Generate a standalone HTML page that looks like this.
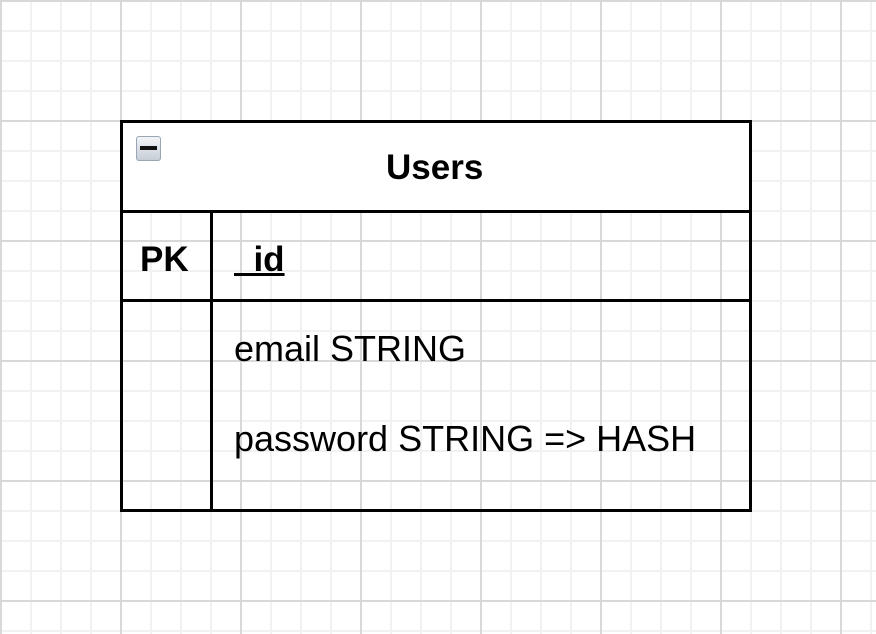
<!DOCTYPE html>
<html><head><style>
html,body{margin:0;padding:0;}
body{width:876px;height:634px;position:relative;overflow:hidden;background-color:#fff;
background-image:
linear-gradient(to right,#d8d8d8 0,#d8d8d8 2px,transparent 2px),
linear-gradient(to bottom,#d8d8d8 0,#d8d8d8 2px,transparent 2px),
linear-gradient(to right,#f1f1f1 0,#f1f1f1 2px,transparent 2px),
linear-gradient(to bottom,#f1f1f1 0,#f1f1f1 2px,transparent 2px);
background-size:120px 120px,120px 120px,30px 30px,30px 30px;
background-position:0 0,0 0,0 0,0 0;
font-family:"Liberation Sans",Arial,sans-serif;}
.b{position:absolute;background:#000;}
.t{position:absolute;font-size:36px;color:#000;white-space:nowrap;line-height:1;}
</style></head><body>
<div style="position:absolute;left:121px;top:121px;width:630px;height:90px;background:#fff"></div>
<div class="b" style="left:120px;top:120px;width:632px;height:3px"></div>
<div class="b" style="left:120px;top:509px;width:632px;height:3px"></div>
<div class="b" style="left:120px;top:120px;width:3px;height:392px"></div>
<div class="b" style="left:749px;top:120px;width:3px;height:392px"></div>
<div class="b" style="left:120px;top:210px;width:632px;height:3px"></div>
<div class="b" style="left:120px;top:299px;width:632px;height:3px"></div>
<div class="b" style="left:210px;top:210px;width:3px;height:302px"></div>
<div style="position:absolute;left:136px;top:136px;width:25px;height:25px;border-radius:3px;background:linear-gradient(#f4f6f9,#c5ccd6);box-shadow:inset 0 0 0 1px #9aa6b4"></div>
<div style="position:absolute;left:140px;top:146px;width:17px;height:4px;background:#111"></div>
<div class="t" style="left:386px;top:150px;font-weight:bold;font-size:35px">Users</div>
<div class="t" style="left:140px;top:242px;font-weight:bold;font-size:35px">PK</div>
<div class="t" style="left:234px;top:242px;font-weight:bold;font-size:35px;text-decoration:underline;">&nbsp;&nbsp;id</div>
<div class="t" style="left:234px;top:331px;">email STRING</div>
<div class="t" style="left:234px;top:421px;">password STRING =&gt; HASH</div>
</body></html>
